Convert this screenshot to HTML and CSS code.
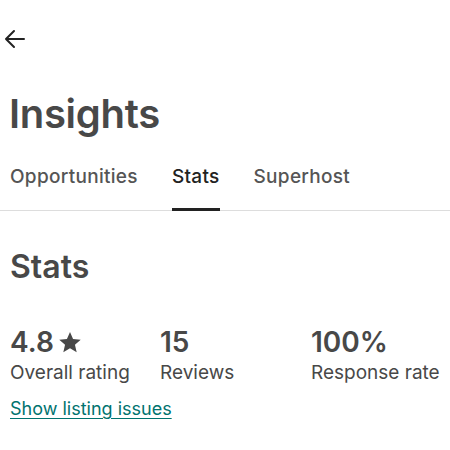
FILE: index.html
```html
<!DOCTYPE html>
<html>
<head>
<meta charset="utf-8">
<link rel="stylesheet" href="styles.css">
</head>
<body>
<div class="page">
  <div class="topbar">
    <svg class="back" width="24" height="24" viewBox="0 0 24 24" fill="none" stroke="#222" stroke-width="2" stroke-linecap="round" stroke-linejoin="round"><path d="M21 12H3M11 4l-8 8 8 8"/></svg>
  </div>
  <h1 class="title">Insights</h1>
  <nav class="tabs">
    <span class="tab">Opportunities</span>
    <span class="tab active">Stats</span>
    <span class="tab">Superhost</span>
  </nav>
  <section class="stats">
    <h2 class="stats-title">Stats</h2>
    <div class="grid">
      <div class="item">
        <div class="value">4.8 <svg class="star" width="24" height="24" viewBox="0 0 32 32"><path fill="#484848" d="M16 2.5l4.1 9.4 10.2 1-7.7 6.8 2.3 10-8.9-5.3-8.9 5.3 2.3-10L1.7 12.9l10.2-1z"/></svg></div>
        <div class="label">Overall rating</div>
      </div>
      <div class="item">
        <div class="value">15</div>
        <div class="label">Reviews</div>
      </div>
      <div class="item">
        <div class="value">100%</div>
        <div class="label">Response rate</div>
      </div>
    </div>
    <a class="link" href="#">Show listing issues</a>
  </section>
</div>
</body>
</html>
```
FILE: styles.css
```css
html, body { margin: 0; padding: 0; background: #fff; }
body { font-family: Inter, "Noto Sans", sans-serif; color: #484848; width: 450px; height: 450px; overflow: hidden; }
.page { display: flex; flex-direction: column; }
.topbar { height: 88px; display: flex; align-items: flex-start; padding: 27px 0 0 3px; box-sizing: border-box; }
.back { display: block; }
.title { margin: 0; padding-left: 9px; font-size: 40px; font-weight: 600; line-height: 52px; letter-spacing: -0.3px; }
.tabs { display: flex; gap: 34px; padding: 0 0 0 10px; margin-top: 25px; border-bottom: 1px solid #ddd; }
.tab { font-size: 19px; line-height: 24px; padding-bottom: 18px; font-weight: 500; color: #555; letter-spacing: 0.3px; border-bottom: 3px solid transparent; }
.tab.active { color: #222; border-bottom-color: #222; margin-bottom: -1px; }
.stats { padding: 0 10px; }
.stats-title { margin: 36px 0 0; font-size: 32px; font-weight: 600; line-height: 40px; }
.grid { display: grid; grid-template-columns: 150px 151px 1fr; margin-top: 39px; }
.value { font-size: 28px; font-weight: 600; line-height: 32px; display: flex; align-items: center; gap: 4px; }
.star { display: block; }
.label { font-size: 19px; line-height: 26px; margin-top: 2px; }
.link { display: inline-block; margin-top: 12px; font-size: 18px; color: #00736f; text-decoration: underline; text-underline-offset: 3px; }
```
